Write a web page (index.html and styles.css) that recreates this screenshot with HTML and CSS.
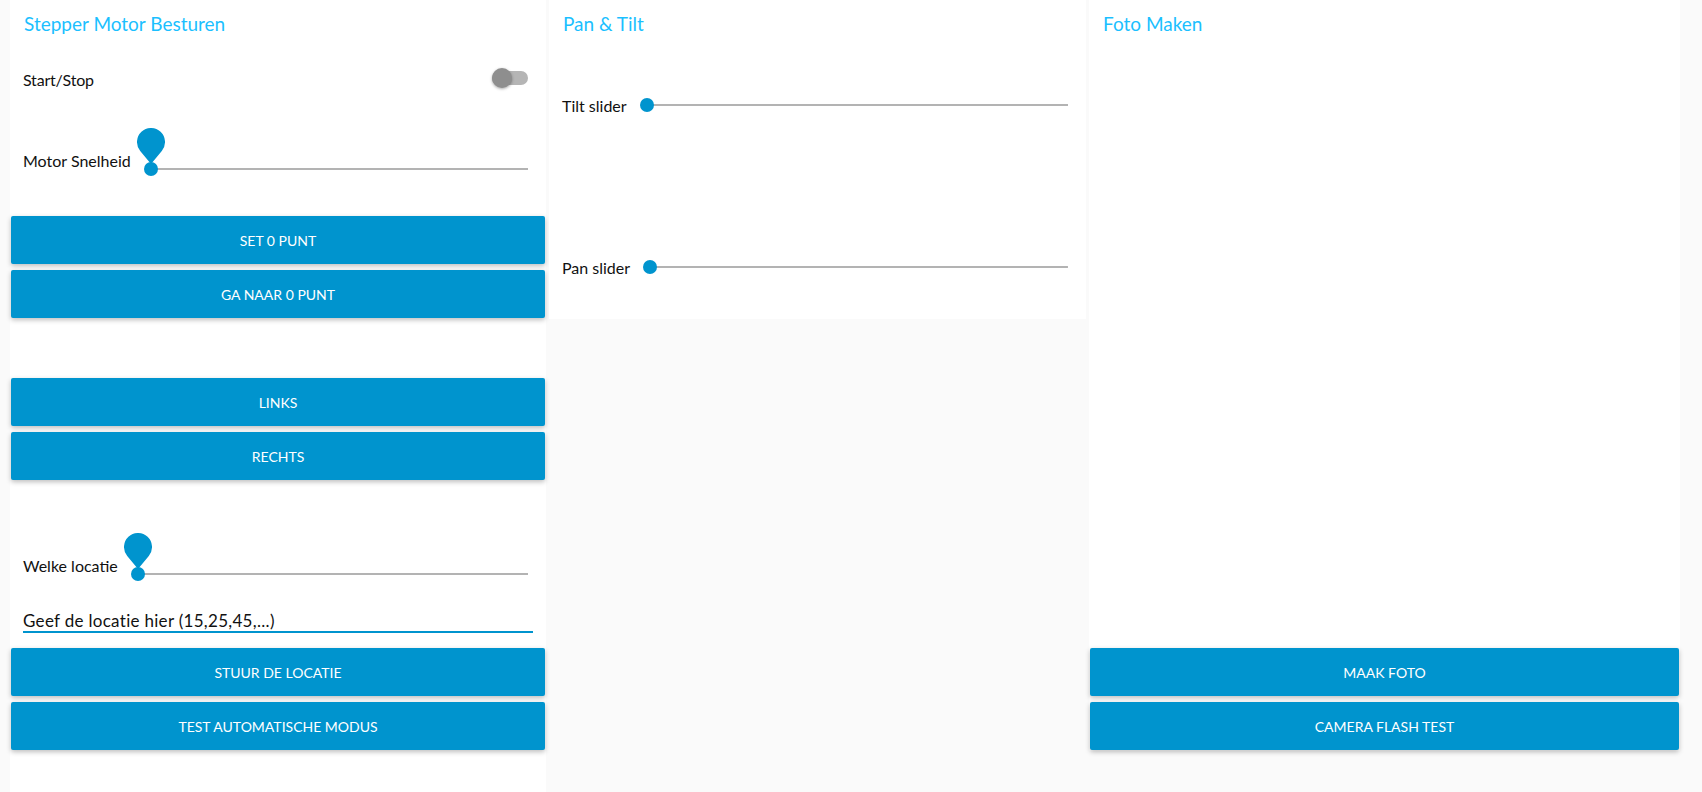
FILE: index.html
```html
<!DOCTYPE html>
<html lang="nl">
<head>
<meta charset="utf-8">
<title>Dashboard</title>
<link rel="stylesheet" href="styles.css">
</head>
<body>
<div class="dash">
  <section class="card card-left">
    <h2 class="card-title">Stepper Motor Besturen</h2>
    <div class="row row-switch">
      <span class="lbl">Start/Stop</span>
      <span class="switch"><span class="switch-thumb"></span></span>
    </div>
    <div class="row row-tall slider-row pinned">
      <span class="lbl">Motor Snelheid</span>
      <div class="slider">
        <svg class="pin" width="28" height="36" viewBox="0 0 28 36"><path d="M3.2 22.9 A14 14 0 1 1 24.8 22.9 L14 36 Z" fill="#0094ce"/></svg>
        <span class="thumb"></span>
      </div>
    </div>
    <button class="btn">Set 0 punt</button>
    <button class="btn">Ga naar 0 punt</button>
    <div class="spacer"></div>
    <button class="btn">Links</button>
    <button class="btn">Rechts</button>
    <div class="spacer"></div>
    <div class="row slider-row pinned">
      <span class="lbl">Welke locatie</span>
      <div class="slider">
        <svg class="pin" width="28" height="36" viewBox="0 0 28 36"><path d="M3.2 22.9 A14 14 0 1 1 24.8 22.9 L14 36 Z" fill="#0094ce"/></svg>
        <span class="thumb"></span>
      </div>
    </div>
    <div class="row row-input">
      <div class="field">Geef de locatie hier (15,25,45,...)</div>
    </div>
    <button class="btn">Stuur de locatie</button>
    <button class="btn">Test automatische modus</button>
  </section>

  <section class="card card-mid">
    <h2 class="card-title">Pan &amp; Tilt</h2>
    <div class="row row-tall slider-row">
      <span class="lbl">Tilt slider</span>
      <div class="slider"><span class="thumb"></span></div>
    </div>
    <div class="spacer"></div>
    <div class="row row-tall slider-row">
      <span class="lbl">Pan slider</span>
      <div class="slider"><span class="thumb"></span></div>
    </div>
  </section>

  <section class="card card-right">
    <h2 class="card-title">Foto Maken</h2>
    <div class="spacer spacer-big"></div>
    <button class="btn">Maak foto</button>
    <button class="btn">Camera flash test</button>
  </section>
</div>
</body>
</html>
```

FILE: styles.css
```css
html, body {
  margin: 0;
  padding: 0;
  height: 100%;
  overflow: hidden;
  background: #fafafa;
}

body {
  font-family: "Lato", "Liberation Sans", sans-serif;
  color: #111111;
}

.dash {
  display: flex;
  align-items: flex-start;
  gap: 3px;
  padding-left: 10px;
  height: 792px;
  box-sizing: border-box;
}

.card {
  background: #ffffff;
  display: flex;
  flex-direction: column;
  gap: 6px;
  padding: 0 1px 1px 1px;
  box-sizing: border-box;
}

.card-left {
  width: 536px;
  align-self: stretch;
}

.card-mid {
  width: 537px;
}

.card-right {
  width: 591px;
}

.card-title {
  margin: 0;
  height: 48px;
  box-sizing: border-box;
  padding: 12px 0 0 13px;
  font-size: 19px;
  line-height: 24px;
  font-weight: normal;
  color: #1bbfff;
}

.row {
  height: 48px;
  display: flex;
  align-items: center;
  padding: 0 17px 0 12px;
  box-sizing: border-box;
  flex-shrink: 0;
}

.row-tall {
  height: 102px;
}

.lbl {
  font-size: 16px;
  line-height: 19px;
  white-space: nowrap;
}

.row-switch {
  justify-content: space-between;
  padding-top: 2px;
}

.row-switch .lbl {
  letter-spacing: -0.2px;
}

.switch {
  position: relative;
  width: 36px;
  height: 14px;
  border-radius: 7px;
  background: #b5b5b5;
  margin-bottom: 2px;
}

.switch-thumb {
  position: absolute;
  left: 0;
  top: -3px;
  width: 20px;
  height: 20px;
  border-radius: 50%;
  background: #8e8e8e;
  box-shadow: 0 1px 3px rgba(0, 0, 0, 0.35);
}

.slider-row.pinned {
  padding-top: 3px;
}

.slider {
  position: relative;
  flex: 1;
  height: 14px;
  margin-left: 20px;
  background: linear-gradient(#b3b3b3, #b3b3b3) no-repeat center / 100% 2px;
}

.pinned .slider {
  margin-top: 16px;
}

.thumb {
  position: absolute;
  left: -7px;
  top: 0;
  width: 14px;
  height: 14px;
  border-radius: 50%;
  background: #0094ce;
}

.pin {
  position: absolute;
  left: -14px;
  top: -34px;
  display: block;
}

.spacer {
  height: 48px;
  flex-shrink: 0;
}

.spacer-big {
  height: 588px;
}

.row-input {
  align-items: flex-end;
  padding: 0 12px 9px 12px;
}

.field {
  flex: 1;
  font-size: 17px;
  line-height: 19px;
  letter-spacing: 0.3px;
  padding-bottom: 1px;
  border-bottom: 2px solid #0094ce;
}

.btn {
  height: 48px;
  flex-shrink: 0;
  border: none;
  border-radius: 2px;
  background: #0094ce;
  color: #ffffff;
  font-family: "Lato", "Liberation Sans", sans-serif;
  font-size: 14px;
  text-transform: uppercase;
  box-shadow: 0 2px 5px rgba(0, 0, 0, 0.26);
  padding: 0;
  cursor: pointer;
}
```
